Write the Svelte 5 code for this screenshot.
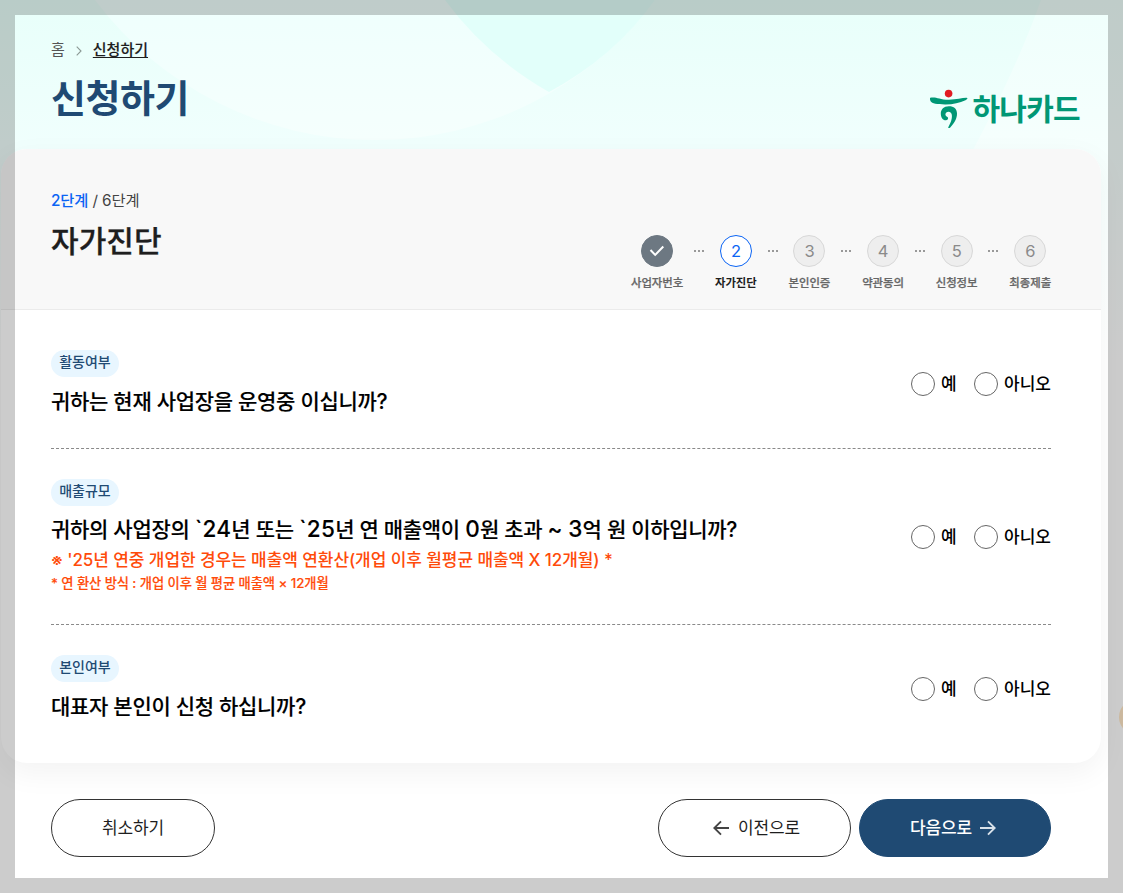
<script>
  const steps = [
    { label: '사업자번호', state: 'done' },
    { label: '자가진단', state: 'active' },
    { label: '본인인증', state: '' },
    { label: '약관동의', state: '' },
    { label: '신청정보', state: '' },
    { label: '최종제출', state: '' }
  ];

  const questions = [
    { tag: '활동여부', text: '귀하는 현재 사업장을 운영중 이십니까?' },
    {
      tag: '매출규모',
      text: '귀하의 사업장의 `24년 또는 `25년 연 매출액이 0원 초과 ~ 3억 원 이하입니까?',
      note: "※ '25년 연중 개업한 경우는 매출액 연환산(개업 이후 월평균 매출액 X 12개월) *",
      detail: '* 연 환산 방식 : 개업 이후 월 평균 매출액 × 12개월'
    },
    { tag: '본인여부', text: '대표자 본인이 신청 하십니까?' }
  ];

  // Odd entries are runs of digits and symbols, which are set slightly larger than Hangul.
  const split = (text) => text.split(/([`\d~]+)/);

  let answers = $state(['', '', '']);
</script>

<div class="page">
  <svg class="backdrop" width="1123" height="893" aria-hidden="true">
    <defs>
      <linearGradient id="base" x1="0" y1="0" x2="0" y2="1">
        <stop offset="0" stop-color="#e8fffa" />
        <stop offset=".4" stop-color="#f0fffd" />
        <stop offset="1" stop-color="#ffffff" />
      </linearGradient>
      <linearGradient id="light" x1="0" y1="0" x2="0" y2="1">
        <stop offset="0" stop-color="#effffd" />
        <stop offset="1" stop-color="#f5fffd" />
      </linearGradient>
      <linearGradient id="side" x1="0" y1="0" x2="0" y2="1">
        <stop offset="0" stop-color="#effffc" />
        <stop offset="1" stop-color="#ffffff" />
      </linearGradient>
    </defs>
    <rect width="1123" height="360" fill="url(#base)" />
    <path d="M95 0A350 350 0 0 0 655 0Z" fill="url(#light)" />
    <path d="M445 0Q486 56 549 92Q614 57 655 0Z" fill="#e2fffa" />
    <path d="M1041 0Q1018 65 974 148L900 360H1123V0Z" fill="url(#side)" />
    <circle cx="1137" cy="717" r="18" fill="#ffe8c7" />
  </svg>

  <header>
    <div>
      <nav>
        <span>홈</span>
        <svg width="6" height="10" viewBox="0 0 6 10"><path d="M.7.7 5 5 .7 9.3" fill="none" stroke="#8b9995" stroke-width="1.1" /></svg>
        <a href="#apply">신청하기</a>
      </nav>
      <h1>신청하기</h1>
    </div>
    <div class="logo">
      <svg width="38" height="40" viewBox="0 0 38 40">
        <circle cx="18.6" cy="4.6" r="3.8" fill="#e11b22" />
        <path d="M.2 8.8C6 7.4 9 10.8 19 10.7C27 10.7 33 8.6 37 8.9C38.3 9.2 36.800 10.7 35.500 11.200C29.500 13.7 23 15.500 15 15.400C7 15.300 2 14.700 .6 12.300C0 11.100-.4 9.400 .2 8.800Z" fill="#009775" />
        <path d="M18.800 17.200C13.800 17.300 10.800 20.300 10.800 24.500C10.800 28.600 13 31.400 15.800 31.300C17.700 31.200 18.600 29.600 17.800 28.300C16.900 27.800 15.500 27.400 15.400 25.600C15.400 23.800 16.900 22.700 18.700 22.800C21.600 23.100 22.400 26 21.700 29.500C21.100 33 19.800 35.300 18.300 38.200C18 39.200 19 39.400 20 38.700C24.300 34.300 27.200 29.300 27 24.200C26.800 19.600 23.700 17.100 18.800 17.200Z" fill="#009775" />
      </svg>
      <span>하나카드</span>
    </div>
  </header>

  <main>
    <section class="head">
      <div>
        <p><b>2단계</b> / 6단계</p>
        <h2>자가진단</h2>
      </div>
      <ol>
        {#each steps as step, i}
          {#if i}<li class="dots"><i></i><i></i><i></i></li>{/if}
          <li class="step {step.state}">
            <span class="num">
              {#if step.state === 'done'}
                <svg width="16" height="12" viewBox="0 0 16 12"><path d="M1.500 5 6.200 9.900 14.300 1.500" fill="none" stroke="#fff" stroke-width="2" /></svg>
              {:else}{i + 1}{/if}
            </span>
            <span class="label">{step.label}</span>
          </li>
        {/each}
      </ol>
    </section>

    <section class="body">
      {#each questions as q, i}
        <div class="row" class:long={q.note}>
          <div class="question">
            <span class="tag">{q.tag}</span>
            <h3>{#each split(q.text) as part, n}{#if n % 2}<span class="latin">{part}</span>{:else}{part}{/if}{/each}</h3>
            {#if q.note}
              <p class="note">{q.note}</p>
              <p class="detail">{q.detail}</p>
            {/if}
          </div>
          <div class="options">
            <label><input type="radio" name="q{i}" value="Y" bind:group={answers[i]} /><span class="yes">예</span></label>
            <label><input type="radio" name="q{i}" value="N" bind:group={answers[i]} /><span class="no">아니오</span></label>
          </div>
        </div>
      {/each}
    </section>
  </main>

  <footer>
    <button class="cancel"><span>취소하기</span></button>
    <div>
      <button class="prev">
        <svg width="16" height="16" viewBox="0 0 16 16"><path d="M16 8H1.500M8 1.300 1.300 8 8 14.700" fill="none" stroke="#444" stroke-width="1.900" /></svg>
        <span>이전으로</span>
      </button>
      <button class="next">
        <span>다음으로</span>
        <svg width="16" height="16" viewBox="0 0 16 16"><path d="M0 8H14.500M8 1.300 14.700 8 8 14.700" fill="none" stroke="#d9e2ea" stroke-width="1.900" /></svg>
      </button>
    </div>
  </footer>
  <div class="frame"></div>
</div>

<style>
  :global(body) { margin: 0; overflow: hidden; }
  * { box-sizing: border-box; }
  h1, h2, h3, p, ol { margin: 0; padding: 0; font-weight: inherit; }
  .page {
    position: relative; width: 1123px; height: 893px; overflow: hidden; background: #fff; color: #1e1e1e;
    font-family: Inter, "Noto Sans CJK KR", sans-serif; letter-spacing: -.012em; white-space: nowrap;
  }
  .backdrop { position: absolute; inset: 0; }
  header, main, footer { position: relative; }
  header { height: 149px; padding: 40px 43px 0 51px; display: flex; justify-content: space-between; }
  nav { height: 20px; display: flex; align-items: center; font-size: 15px; line-height: 20px; color: #555; letter-spacing: 0; }
  nav svg { margin: 1px 11px 0 11px; }
  nav a { color: #1e1e1e; font-weight: 500; -webkit-text-stroke: .15px; text-decoration: underline; text-underline-offset: 2px; }
  h1 { margin-top: 11px; height: 54px; line-height: 54px; font-size: 38px; font-weight: 700; letter-spacing: -.5px; color: #1f4a73; }
  .logo { display: flex; height: 40px; margin-top: 49px; gap: 4px; align-items: center; color: #009775; }
  .logo span { font-size: 30px; font-weight: 700; line-height: 40px; letter-spacing: -.7px; }

  main {
    width: 1100px; height: 614px; margin-left: 1px; border-radius: 26px; background: #fff;
    box-shadow: 0 10px 30px rgba(0, 0, 0, .05);
  }
  .head {
    height: 161px; padding: 41px 50px 0; border-radius: 26px 26px 0 0; border-bottom: 1px solid #ebebeb;
    background: #f8f8f8; display: flex; justify-content: space-between;
  }
  .head p { height: 22px; line-height: 22px; font-size: 15.300px; letter-spacing: -.1px; color: #444; }
  .head b { color: #0b64f4; font-weight: 500; }
  h2 { height: 42px; margin-top: 8px; line-height: 42px; font-size: 30px; font-weight: 500; letter-spacing: .05px; -webkit-text-stroke: .3px; }
  ol { list-style: none; display: flex; padding-top: 45px; }
  .step { width: 41.600px; display: flex; flex-direction: column; align-items: center; }
  .step.done { width: 52px; }
  .num {
    width: 32px; height: 32px; border: 1px solid #d8d8d8; border-radius: 50%; background: #eee; color: #8a8a8a;
    display: flex; align-items: center; justify-content: center; font-size: 16.500px;
  }
  .done .num { background: #6d7882; border-color: #6d7882; }
  .active .num { background: #fff; border-color: #0b64f4; color: #0b64f4; }
  .label { margin-top: 8px; line-height: 16px; font-size: 11.400px; font-weight: 500; letter-spacing: -.05px; color: #666; -webkit-text-stroke: .25px; }
  .active .label { color: #1e1e1e; font-weight: 700; -webkit-text-stroke: 0; }
  .dots { width: 32px; height: 32px; display: flex; align-items: center; justify-content: center; gap: 2px; }
  .dots i { width: 2px; height: 2px; background: #999; }

  .body { padding: 10px 50px; }
  .row { padding: 30px 0; display: flex; align-items: center; justify-content: space-between; border-bottom: 1px dashed #8a8a8a; }
  .row:last-child { border-bottom: 0; }
  .tag {
    display: block; width: 68px; height: 27px; border-radius: 14px; background: #e8f6ff; color: #1f4a73;
    text-align: center; line-height: 24px; font-size: 14px; font-weight: 500; letter-spacing: 0;
  }
  h3 {
    margin-top: 8px; height: 33px; line-height: 33px; font-size: 21px; font-weight: 500; color: #000;
    letter-spacing: -.3px; -webkit-text-stroke: .12px;
  }
  .long h3 { margin-top: 7px; height: 34px; }
  .latin { font-size: 22.500px; line-height: 1; letter-spacing: .25px; }
  .note { height: 27px; line-height: 27px; font-size: 17px; font-weight: 500; letter-spacing: -.08px; color: #ff4b0a; }
  .detail { height: 20px; line-height: 18px; font-size: 13.300px; font-weight: 500; letter-spacing: -.09px; color: #ff4b0a; -webkit-text-stroke: .15px; }
  .options { display: flex; gap: 17px; }
  label { display: flex; align-items: center; gap: 6px; height: 24px; font-size: 17px; line-height: 24px; color: #000; font-weight: 500; }
  input { appearance: none; width: 24px; height: 24px; margin: 0; border: 1px solid #666; border-radius: 50%; background: #fff; }
  input:checked { border: 7px solid #1f4a73; }
  .yes { width: 16px; }
  .no { width: 47px; letter-spacing: 0; }

  footer { padding: 36px 72px 0 51px; display: flex; justify-content: space-between; }
  footer div { display: flex; gap: 8px; }
  button {
    height: 58px; padding: 0; border: 1px solid #333; border-radius: 29px; background: #fff; color: #1e1e1e;
    font: 400 17px Inter, "Noto Sans CJK KR", sans-serif; letter-spacing: inherit;
    display: flex; align-items: center; justify-content: center; gap: 8px;
  }
  button span { padding-bottom: 3px; }
  .cancel { width: 164px; }
  .prev { width: 193px; padding-left: 4px; gap: 9px; }
  .next { width: 192px; padding-right: 4px; background: #1f4a73; border-color: #1f4a73; color: #fff; font-weight: 500; }
  .frame { position: absolute; inset: 0; border: 15px solid rgba(0, 0, 0, .2); pointer-events: none; }
</style>
